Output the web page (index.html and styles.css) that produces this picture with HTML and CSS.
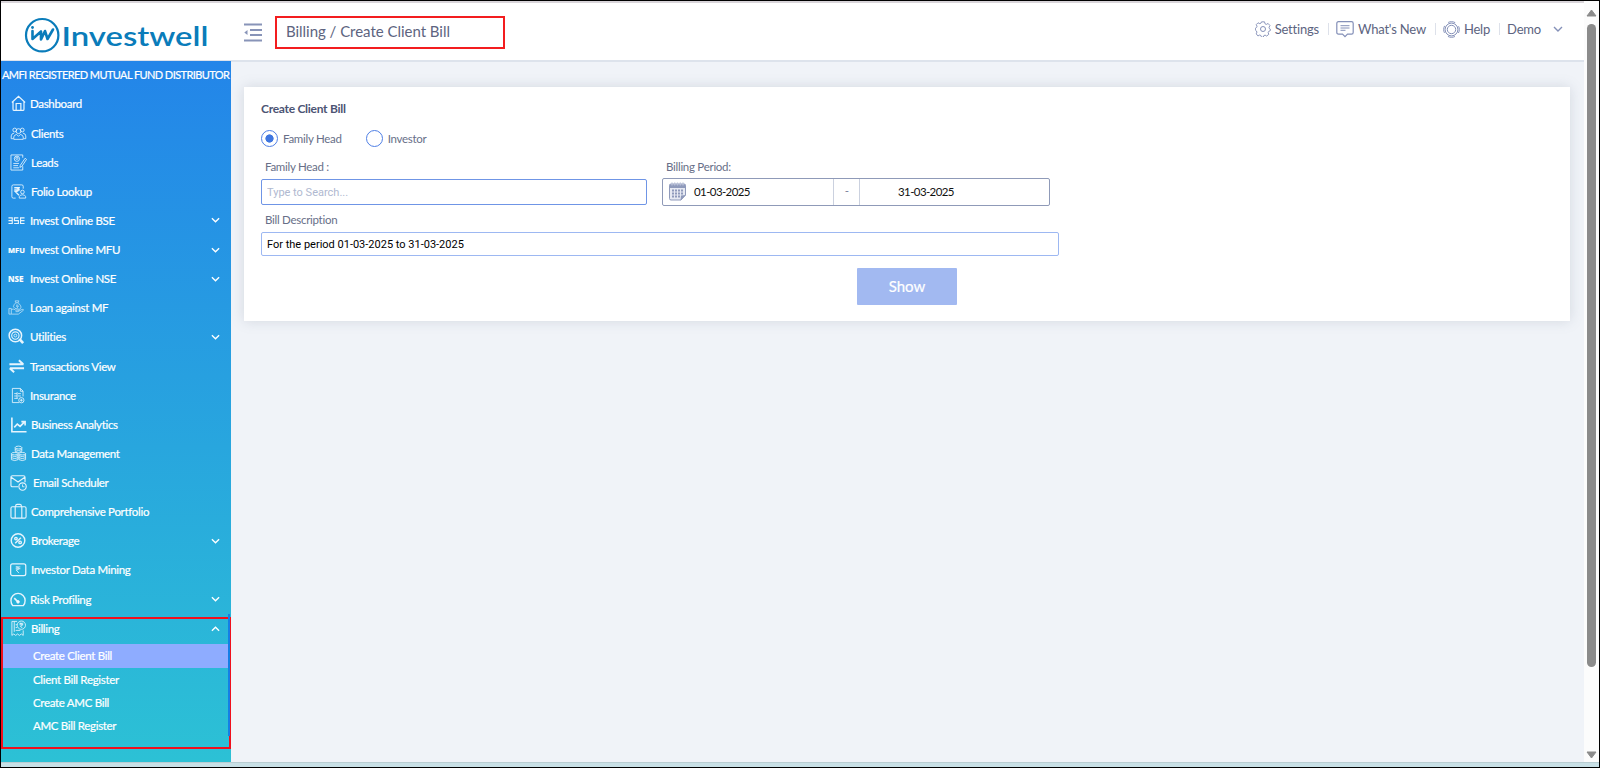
FILE: index.html
```html
<!DOCTYPE html>
<html lang="en">
<head>
    <meta charset="UTF-8">
    <meta name="viewport" content="width=device-width, initial-scale=1.0">
    <title>Create Client Bill</title>
    <link rel="stylesheet" href="styles.css">
</head>
<body>
<div class="window">
    <header class="header">
        <div class="logo">
            <svg width="192" height="38" viewBox="0 0 192 38">
                <circle cx="19.2" cy="19.2" r="16.2" fill="none" stroke="#0a7cba" stroke-width="2.2"/>
                <path d="M9.500 15v8l8.500-7.500v8l4-8.500 2.500 8 5.500-9.500" fill="none" stroke="#0a7cba" stroke-width="2.600" stroke-linejoin="round" stroke-linecap="round"/>
                <circle cx="9.500" cy="11.500" r="1.400" fill="#0a7cba"/>
                <text class="logo-text" x="38.500" y="29.500" textLength="147" lengthAdjust="spacingAndGlyphs">Investwell</text>
            </svg>
        </div>
        <svg class="menu-toggle" width="18" height="19" viewBox="0 0 18 19">
            <path d="M0 1.500h18M6 7h12M6 12h12M0 17.500h18" stroke="#8894b8" stroke-width="2"/>
            <path d="M3.500 7v5L.3 9.500z" fill="#8894b8"/>
        </svg>
        <div class="breadcrumb">Billing / Create Client Bill</div>
        <nav class="top-links">
            <a class="top-link settings">
                <svg width="16" height="16" viewBox="0 0 16 16" fill="none" stroke="#8490b8">
                    <path d="M6.400.7h3.200l.5 2 1.400.7 1.900-1 2 2.300-1 1.700.3 1.300 1 .6v1.800l-1.700.8-.5 1.200.6 1.900-2.200 1.800-1.700-1-1.300.5-.7 1.800H6.500l-.8-1.900-1.300-.5-1.800 1L.8 13.500l.7-1.900-.6-1.300-1-.8V7.400l1.300-.8.4-1.200-.8-1.800 1.900-1.900 1.900.9 1.300-.6z" transform="translate(.5 .2) scale(.94)"/>
                    <circle cx="8" cy="8" r="2.500"/>
                </svg>
                <span>Settings</span>
            </a>
            <a class="top-link news">
                <svg width="18" height="17" viewBox="0 0 18 17" fill="none" stroke="#8490b8">
                    <path d="M2.500.7h13q1.700 0 1.700 1.700v9q0 1.700-1.700 1.700h-4L9 15.600l-2.500-2.500h-4Q.8 13.100.8 11.400v-9Q.8.7 2.500.7z" stroke-width="1.200"/>
                    <path d="M4.500 4.700h9M4.500 7h9M4.500 9.300h5"/>
                </svg>
                <span>What's New</span>
            </a>
            <a class="top-link help">
                <svg width="17" height="17" viewBox="0 0 17 17" fill="none" stroke="#8490b8">
                    <circle cx="8.500" cy="8.500" r="7.800" stroke-dasharray="7.250 5" stroke-dashoffset="3.620"/>
                    <circle cx="8.500" cy="8.500" r="6.400"/>
                    <circle cx="8.500" cy="8.500" r="4.200"/>
                </svg>
                <span>Help</span>
            </a>
            <a class="top-link demo">
                <span>Demo</span>
                <svg width="10" height="6" viewBox="0 0 10 6"><path d="M1 1l4 4 4-4" fill="none" stroke="#8490b8" stroke-width="1.400"/></svg>
            </a>
        </nav>
    </header>

    <div class="page">
        <aside class="sidebar">
            <div class="sidebar-title">AMFI REGISTERED MUTUAL FUND DISTRIBUTOR</div>
            <ul class="menu">
                <li>
                    <svg class="icon" viewBox="0 0 18 18"><path d="M2 8l7-6.500L16 8M3.200 7.200V15q0 1.300 1.300 1.300h9q1.300 0 1.300-1.300V7.200M6.500 16V9h5v7" stroke-width="1.300"/></svg>
                    <span>Dashboard</span>
                </li>
                <li>
                    <svg class="icon" viewBox="0 0 18 18"><circle cx="5" cy="5.300" r="2"/><circle cx="13" cy="5.300" r="2"/><circle cx="9" cy="6.500" r="2.600"/><path d="M3.500 14.500H1.300v-3Q1.500 9 4.300 8.600M14.500 14.500h2.200v-3q-.2-2.500-3-2.900M4 15.200v-2.500q.3-2.200 3-2.700l2 2 2-2q2.700.5 3 2.700v2.500z"/></svg>
                    <span class="nudge">Clients</span>
                </li>
                <li>
                    <svg class="icon" viewBox="0 0 18 18"><path d="M13.500 4V1H1v16h12.500v-4M3.500 10h6M3.500 12.300h5M3.500 14.600h6M16 4.500l1.500 1.200-5 7.500-2 1 .4-2.200z"/><circle cx="7.300" cy="5" r="2.800"/><circle cx="7.300" cy="4.500" r="1.200"/></svg>
                    <span class="nudge">Leads</span>
                </li>
                <li>
                    <svg class="icon" viewBox="0 0 18 18"><path d="M14 6V3.500Q14 2 12.500 2h-9Q2 2 2 3.500v11Q2 16 3.500 16H6"/><path d="M4.500 5h6M4.500 7.200h6M5.500 5q3.500 0 3.500 2t-3.500 2l4 4" stroke-width="1.400"/><circle cx="13.200" cy="9.500" r="1.900"/><path d="M9.800 16v-1.500q.5-2 3.400-2t3.400 2V16z"/></svg>
                    <span class="nudge">Folio Lookup</span>
                </li>
                <li>
                    <svg class="icon wide" viewBox="0 0 18 18"><path d="M.5 6.200h4v6h-4M.5 9.200h4M11 6.200H6.800v3H11v3H6.500M17.500 6.200h-4.200v6h4.200M13.300 9.200h4.200" stroke-width="1.200"/></svg>
                    <span>Invest Online BSE</span>
                    <svg class="arrow" viewBox="0 0 10 6"><path d="M1 1l4 4 4-4"/></svg>
                </li>
                <li>
                    <span class="text-icon">MFU</span>
                    <span>Invest Online MFU</span>
                    <svg class="arrow" viewBox="0 0 10 6"><path d="M1 1l4 4 4-4"/></svg>
                </li>
                <li>
                    <span class="text-icon nse">NSE</span>
                    <span>Invest Online NSE</span>
                    <svg class="arrow" viewBox="0 0 10 6"><path d="M1 1l4 4 4-4"/></svg>
                </li>
                <li>
                    <svg class="icon wide faint" viewBox="0 0 18 18"><path d="M1 10h2.500v6H1zM3.500 11q3-1 4.500.8h3q1.200.8-.3 1.600H8M11 13l4-2q1.800-.2 1.200 1L11 16H3.500M7.500 10Q4.500 8.500 6.500 6l1.800-2L7.500 2h4l-.8 2 2.300 2.500q2 2-.5 4.500zM8.300 4h2.500M8.500 6.500h2.500M8.500 7.700h2.500l-1.500 2"/></svg>
                    <span>Loan against MF</span>
                </li>
                <li>
                    <svg class="icon wide" viewBox="0 0 18 18"><circle cx="7.800" cy="8" r="6.600" stroke-width="1.600"/><circle cx="7.800" cy="8" r="3.900" stroke-width="1.200"/><circle cx="7.800" cy="8" r="1.500"/><path d="M12 11.500l4 4.500" stroke-width="2.800"/></svg>
                    <span>Utilities</span>
                    <svg class="arrow" viewBox="0 0 10 6"><path d="M1 1l4 4 4-4"/></svg>
                </li>
                <li>
                    <svg class="icon wide" viewBox="0 0 18 18"><path d="M1.500 6.700h15M11.500 2.500l4.700 4.200M17 10.900H2M6.500 15.100l-4.700-4.200" stroke-width="2.100"/></svg>
                    <span>Transactions View</span>
                </li>
                <li>
                    <svg class="icon" viewBox="0 0 18 18"><path d="M9.500 16.500h-7v-15h8.500l2.800 2.800V10M11 1.500v3h2.800M4.500 7h3M8.500 7h3M4.500 9.500h3M8.500 9.500h3M4.500 12h3.500M7.500 5.500v7"/><circle cx="12" cy="14" r="2.800"/><path d="M10.500 14h3M12 12.500v3"/></svg>
                    <span>Insurance</span>
                </li>
                <li>
                    <svg class="icon" viewBox="0 0 18 18"><path d="M2 1.500v15.200h15.500M4.500 12l3.200-3.500 3 2.500 5-5M12 6h4v4" stroke-width="1.700"/></svg>
                    <span class="nudge">Business Analytics</span>
                </li>
                <li>
                    <svg class="icon" viewBox="0 0 18 18"><ellipse cx="9" cy="2.700" rx="3.500" ry="1.500"/><path d="M5.500 2.700v4q3.500 2.500 7 0v-4M5.500 4.800q3.500 2.300 7 0"/><ellipse cx="5" cy="9.200" rx="3.500" ry="1.300"/><ellipse cx="13" cy="9.200" rx="3.500" ry="1.300"/><path d="M1.500 9.200v6.300q3.500 2 7 0V9.200M9.500 9.200v6.300q3.500 2 7 0V9.200M1.500 11.300q3.500 2 7 0M1.500 13.400q3.500 2 7 0M9.500 11.300q3.500 2 7 0M9.500 13.400q3.500 2 7 0"/></svg>
                    <span class="nudge">Data Management</span>
                </li>
                <li>
                    <svg class="icon" viewBox="0 0 18 18"><path d="M8.500 13.500H2.700q-1.700 0-1.700-1.700V3.500q0-1.700 1.700-1.700h11.500q1.700 0 1.700 1.700v5.200M1.300 3.500l7.200 5 7.200-5" stroke-width="1.200"/><circle cx="13.300" cy="13.300" r="3.900" stroke-width="1.200"/><path d="M13.300 11v2.500h2"/></svg>
                    <span class="nudge-far">Email Scheduler</span>
                </li>
                <li>
                    <svg class="icon" viewBox="0 0 18 18"><rect x="1" y="4" width="16" height="12" rx="1.500" stroke-width="1.200"/><path d="M5.500 16V4M12.500 16V4M6 4V3q0-1.500 1.500-1.500h3Q12 1.500 12 3v1" stroke-width="1.200"/></svg>
                    <span class="nudge">Comprehensive Portfolio</span>
                </li>
                <li>
                    <svg class="icon" viewBox="0 0 18 18"><circle cx="8.500" cy="9" r="7.200" stroke-width="1.500"/><circle cx="6.300" cy="7" r="1.300" stroke-width="1.500"/><circle cx="10.700" cy="11" r="1.300" stroke-width="1.500"/><path d="M11.500 6l-6 6" stroke-width="1.500"/></svg>
                    <span class="nudge">Brokerage</span>
                    <svg class="arrow" viewBox="0 0 10 6"><path d="M1 1l4 4 4-4"/></svg>
                </li>
                <li>
                    <svg class="icon" viewBox="0 0 18 18"><rect x=".7" y="3" width="16" height="12.500" rx="2" stroke-width="1.300"/><path d="M6 6.300h5M6 8.200h5M6.500 6.300q3 0 3 1.600T6.500 9.500l3 3.300"/></svg>
                    <span class="nudge">Investor Data Mining</span>
                </li>
                <li>
                    <svg class="icon" viewBox="0 0 18 18"><path d="M3 15.500Q1 13.500 1 10a7.500 7.500 0 0 1 15 0q0 3.500-2 5.500z" stroke-width="1.500"/><path d="M8.500 11.500L4.500 7.500" stroke-width="1.700"/><circle cx="8.500" cy="11.500" r="1.400" fill="#fff"/></svg>
                    <span>Risk Profiling</span>
                    <svg class="arrow" viewBox="0 0 10 6"><path d="M1 1l4 4 4-4"/></svg>
                </li>
            </ul>
            <div class="billing-group">
                <div class="billing-head">
                    <svg class="icon" viewBox="0 0 18 18"><path d="M7.500 1.500H2v14.800l2-1.500 2 1.500 2-1.500 2 1.500 2-1.500 2 1.500V11M4.500 1.500v11M6 5h1.500M6 8h1.500M6 11h5"/><circle cx="12" cy="5.500" r="4.400"/><path d="M10 3.500h4M10 5h4M10.500 3.500q2.500 0 2.500 1.500t-2 1.500l2 2"/></svg>
                    <span class="nudge">Billing</span>
                    <svg class="arrow" viewBox="0 0 10 6"><path d="M1 5l4-4 4 4"/></svg>
                </div>
                <ul class="submenu">
                    <li class="active">Create Client Bill</li>
                    <li>Client Bill Register</li>
                    <li>Create AMC Bill</li>
                    <li>AMC Bill Register</li>
                </ul>
                <div class="side-scroll"></div>
            </div>
        </aside>

        <main class="content">
            <form class="card">
                <h2>Create Client Bill</h2>
                <div class="radios">
                    <label><span class="radio checked"></span>Family Head</label>
                    <label><span class="radio"></span>Investor</label>
                </div>
                <div class="fields">
                    <div class="field">
                        <label for="head">Family Head :</label>
                        <input type="text" id="head" class="search" placeholder="Type to Search...">
                    </div>
                    <div class="field period">
                        <label>Billing Period:</label>
                        <div class="date-range">
                            <div class="date from">
                                <svg width="17" height="19" viewBox="0 0 17 19">
                                    <path d="M.5 3.500Q.5 2 2 2h13q1.500 0 1.500 1.500V13L12 18H2Q.5 18 .5 16.500z" fill="#e6e9f2" stroke="#8f9abb"/>
                                    <path d="M.5 2.500h16V6H.5zM11.500 18.500l.5-5 5-.5z" fill="#8f9abb"/>
                                    <path d="M3 .5v3M5.700.5v3M8.500.5v3M11.300.5v3M14 .5v3" stroke="#b9c1d8" stroke-width="1.300"/>
                                    <path d="M3 8.500h11.500M3 11.500h11.500M3 14.500h8.500" stroke="#8f9abb" stroke-width="1.800" stroke-dasharray="2 1"/>
                                </svg>
                                <span>01-03-2025</span>
                            </div>
                            <div class="dash">-</div>
                            <div class="date to">31-03-2025</div>
                        </div>
                    </div>
                </div>
                <div class="field description">
                    <label for="desc">Bill Description</label>
                    <input type="text" id="desc" value="For the period 01-03-2025 to 31-03-2025">
                </div>
                <button type="button" class="show-btn">Show</button>
            </form>
        </main>
    </div>

    <div class="bottom-strip"></div>

    <div class="scrollbar">
        <svg width="11" height="8" viewBox="0 0 11 8"><path d="M5.500 1L10 7H1z" fill="#8b8b8b" stroke="#8b8b8b" stroke-linejoin="round"/></svg>
        <div class="thumb"></div>
        <svg width="11" height="8" viewBox="0 0 11 8"><path d="M5.500 7L10 1H1z" fill="#8b8b8b" stroke="#8b8b8b" stroke-linejoin="round"/></svg>
    </div>
</div>
</body>
</html>
```

FILE: styles.css
```css
* {
    box-sizing: border-box;
}

body {
    margin: 0;
    font-family: Lato, sans-serif;
    background: #000;
}

ul {
    list-style: none;
    margin: 0;
    padding: 0;
}

.window {
    width: 1600px;
    height: 768px;
    border: 1px solid #000;
    display: grid;
    grid-template-columns: 1583px 15px;
    grid-template-rows: 61px 700px 5px;
    overflow: hidden;
    background: #f0f3f8;
}

/* Header */
.header {
    display: flex;
    align-items: flex-start;
    background: #fff;
    border-bottom: 2px solid #dde3ec;
    box-shadow: inset 0 3px 0 -1px #d9d5da;
}

.logo {
    padding: 15px 0 0 22px;
    width: 243px;
}

.logo-text {
    font-family: Lato, sans-serif;
    font-size: 27px;
    font-weight: 600;
    fill: #0a7cba;
}

.menu-toggle {
    margin-top: 22px;
    flex: none;
}

.breadcrumb {
    margin: 15px 0 0 13px;
    width: 230px;
    height: 33px;
    padding-left: 9px;
    border: 2px solid #f31d1f;
    color: #5d6480;
    font-size: 15px;
    line-height: 27px;
    letter-spacing: -0.03px;
}

.top-links {
    margin: 19px 21px 0 auto;
    display: flex;
    color: #5d6480;
    font-size: 13px;
    letter-spacing: -0.2px;
}

.top-link {
    display: flex;
    align-items: center;
    height: 18px;
    gap: 4px;
}

.top-link + .top-link {
    margin-left: 9px;
    padding-left: 8px;
    background: linear-gradient(#dde1ea, #dde1ea) left center / 1px 12px no-repeat;
}

.demo svg {
    margin-left: 8px;
}

/* Sidebar */
.page {
    display: flex;
}

.sidebar {
    width: 230px;
    margin-top: -1px;
    background: linear-gradient(#2385e9, #2cc1d5);
    color: #fff;
    font-size: 11.5px;
    letter-spacing: -0.31px;
    -webkit-text-stroke: 0.2px #fff;
}

.sidebar-title {
    height: 28px;
    padding-left: 1px;
    font-size: 11px;
    line-height: 27px;
    letter-spacing: -0.59px;
    white-space: nowrap;
}

.menu li,
.billing-head {
    display: flex;
    align-items: center;
    height: 29.14px;
    padding: 0 11px 0 9px;
}

.menu {
    padding-top: 0.4px;
}

.icon {
    width: 17px;
    height: 17px;
    margin-right: 3px;
    fill: none;
    stroke: #e6f4fd;
    stroke-width: 0.9;
}

.icon.wide {
    margin: 0 5px 0 -2px;
}

.icon.faint {
    opacity: 0.75;
}

.nudge {
    margin-left: 1px;
}

.nudge-far {
    margin-left: 3px;
}

.text-icon {
    width: 22px;
    margin-left: -2px;
    font: bold 7.5px "Open Sans", sans-serif;
    letter-spacing: 0;
}

.nse {
    font-size: 8px;
}

.arrow {
    width: 9px;
    height: 6px;
    margin-left: auto;
    fill: none;
    stroke: #fff;
    stroke-width: 1.5;
}

.billing-group {
    position: relative;
    height: 132px;
    margin-top: 3.6px;
    border: 2px solid #f0101c;
}

.billing-head {
    height: 25px;
    padding: 0 9px 6px 7px;
}

.submenu li {
    height: 23.3px;
    padding-left: 30px;
    line-height: 23px;
}

.submenu .active {
    background: #8eacff;
}

.side-scroll {
    position: absolute;
    top: -5px;
    right: -1px;
    width: 2px;
    height: 122px;
    background: #147fe6;
}

/* Content */
.content {
    padding: 25px 0 0 13px;
}

.card {
    width: 1326px;
    height: 234px;
    padding: 14px 17px;
    background: #fff;
    box-shadow: 0 0 12px rgba(110, 125, 140, 0.22);
    color: #686f88;
    font-size: 11.5px;
    letter-spacing: -0.28px;
}

.card h2 {
    margin: 0;
    color: #4c5474;
    font-size: 12px;
    line-height: 15px;
}

.radios {
    display: flex;
    gap: 24px;
    margin-top: 13px;
}

.radios label {
    display: flex;
    align-items: center;
    gap: 5px;
    height: 18px;
}

.radio {
    width: 17px;
    height: 17px;
    border: 1px solid #4f7fe5;
    border-radius: 50%;
}

.radio.checked {
    background: radial-gradient(circle, #3f76e0 3.8px, #fff 4.4px);
}

.fields {
    display: flex;
    gap: 15px;
    margin-top: 12px;
}

.field {
    width: 386px;
}

.field label {
    display: block;
    height: 20px;
    padding-left: 4px;
    line-height: 16px;
}

.field input {
    display: block;
    width: 100%;
    height: 26px;
    padding: 0 5px;
    border: 1px solid #6f95e6;
    border-radius: 2px;
    font-family: Roboto, sans-serif;
    font-size: 11px;
    color: #000;
}

.search::placeholder {
    color: #b0b9d0;
}

.period {
    width: 388px;
}

.period label {
    height: 19px;
}

.date-range {
    display: flex;
    height: 28px;
    border: 1px solid #8f9ab8;
    border-radius: 2px;
    color: #111;
    line-height: 24px;
    letter-spacing: -0.6px;
}

.date {
    display: flex;
    align-items: center;
    padding-bottom: 1px;
}

.from {
    width: 170px;
    padding-left: 6px;
    gap: 8px;
}

.dash {
    width: 27px;
    border: solid #cbd1df;
    border-width: 0 1px;
    text-align: center;
    color: #7b839c;
}

.to {
    padding-left: 38px;
}

.description {
    width: 798px;
    margin-top: 6px;
}

.description input {
    height: 24px;
    border-color: #9db8f2;
}

.show-btn {
    display: block;
    width: 100px;
    height: 37px;
    margin: 12px 0 0 596px;
    padding: 0 0 1px;
    border: none;
    border-radius: 1px;
    background: #a2b9f1;
    color: #fff;
    font: 15px Lato, sans-serif;
    -webkit-text-stroke: 0.2px #fff;
}

.bottom-strip {
    grid-column: 1 / 3;
    grid-row: 3;
    background: #c8e0e6;
    border-top: 1px solid #b9cdd2;
}

/* Window scrollbar */
.scrollbar {
    grid-column: 2;
    grid-row: 1 / 3;
    display: flex;
    flex-direction: column;
    align-items: center;
    padding: 8px 1px 3px 0;
    background: #fcfcfc;
}

.thumb {
    width: 9px;
    height: 643px;
    margin: 7px 0 auto;
    border-radius: 5px;
    background: #8b8b8b;
}
```
